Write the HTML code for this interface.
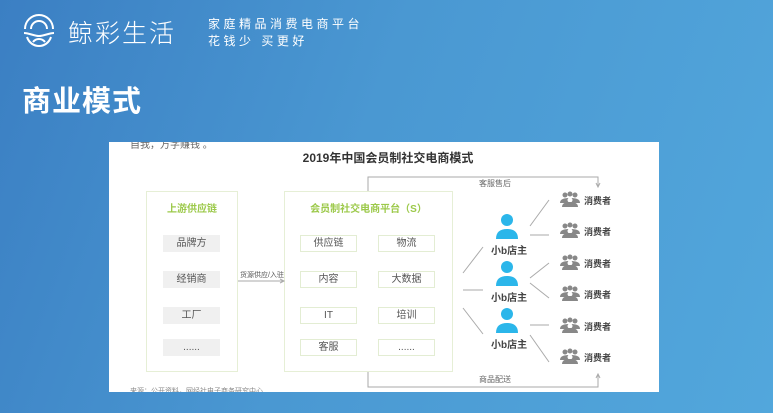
<!DOCTYPE html><html><head><meta charset="utf-8"><style>
*{margin:0;padding:0;box-sizing:border-box}
body{width:773px;height:413px;overflow:hidden;position:relative;font-family:"Liberation Sans","Noto Sans CJK SC",sans-serif;background:linear-gradient(110deg,#3b7fc3 0%,#4a98d2 45%,#52a7dc 100%)}
.a{position:absolute}
.t{color:#fff}
.card{left:109px;top:142px;width:550px;height:250px;background:#fff;overflow:hidden}
.box{position:absolute;border:1px solid #e6efd6}
.it{position:absolute;width:57px;height:17px;font-size:10px;color:#555;text-align:center;line-height:17px}
.g{background:#f0f0f0}
.w{border:1px solid #e3edd3;background:#fff;line-height:15px}
.gt{position:absolute;font-size:10px;font-weight:bold;color:#9cc94a;text-align:center}
.s{font-size:9px;color:#555;font-weight:bold}
</style></head><body>
<svg class="a" style="left:20px;top:12px" width="38" height="38" viewBox="0 0 38 38" fill="none" stroke="#fff" stroke-width="2"><path d="M5 17a14 14 0 0 1 28 0"/><path d="M11 17a8 8 0 0 1 16 0"/><path d="M4 21c5 0 10 3 15 3s10-3 15-3"/><path d="M7 25c2 6 7 9 12 9s10-3 12-9"/><path d="M13 30c3-4 9-4 12 0"/></svg>
<div class="a t" style="left:68px;top:14px;font-size:25px;letter-spacing:2px;font-weight:300">鲸彩生活</div>
<div class="a t" style="left:208px;top:15px;font-size:12px;letter-spacing:3.5px">家庭精品消费电商平台</div>
<div class="a t" style="left:208px;top:32px;font-size:12px;letter-spacing:3.5px">花钱少 买更好</div>
<div class="a t" style="left:22px;top:78px;font-size:29px;font-weight:bold;letter-spacing:1px">商业模式</div>
<div class="a card">
<div class="a" style="left:21px;top:-6px;font-size:10px;color:#666">自我，万字赚钱 。</div>
<div class="a" style="left:0;width:550px;top:7px;text-align:center;font-size:12px;font-weight:bold;color:#333;padding-left:8px">2019年中国会员制社交电商模式</div>
<div class="box" style="left:37px;top:49px;width:92px;height:181px"></div>
<div class="gt" style="left:37px;top:58px;width:92px">上游供应链</div>
<div class="it g" style="left:54px;top:93px">品牌方</div>
<div class="it g" style="left:54px;top:129px">经销商</div>
<div class="it g" style="left:54px;top:165px">工厂</div>
<div class="it g" style="left:54px;top:197px">......</div>
<div class="box" style="left:175px;top:49px;width:169px;height:181px"></div>
<div class="gt" style="left:175px;top:58px;width:169px">会员制社交电商平台（S）</div>
<div class="it w" style="left:191px;top:93px">供应链</div><div class="it w" style="left:269px;top:93px">物流</div>
<div class="it w" style="left:191px;top:129px">内容</div><div class="it w" style="left:269px;top:129px">大数据</div>
<div class="it w" style="left:191px;top:165px">IT</div><div class="it w" style="left:269px;top:165px">培训</div>
<div class="it w" style="left:191px;top:197px">客服</div><div class="it w" style="left:269px;top:197px">......</div>
<div class="a" style="left:131px;top:128px;font-size:7px;color:#555">货源供应/入驻</div>
<svg class="a" style="left:0;top:0" width="550" height="250" fill="none" stroke="#aaa" stroke-width="1">
<path d="M129 139H175M171 137l4 2-4 2"/>
<path d="M259 49V35H489V45M487 41l2 4 2-4"/>
<path d="M259 230V245H489V232M487 236l2-4 2 4"/>
<path d="M354 131l20-26M354 148h20M354 166l20 26"/>
<path d="M421 84l19-26M421 93h19M421 136l19-15M421 141l19 15M421 183h19M421 193l19 27"/>
</svg>
<div class="a" style="left:370px;top:36px;font-size:8px;color:#666">客服售后</div>
<div class="a" style="left:370px;top:232px;font-size:8px;color:#666">商品配送</div>
<svg class="a" style="left:385px;top:70px" width="24" height="130" fill="#2bb6ea">
<g id="p"><circle cx="13" cy="8" r="6"/><path d="M2 27c0-7 4-10 11-10s11 3 11 10z"/></g>
<use href="#p" y="47"/><use href="#p" y="94"/></svg>
<div class="a s" style="left:382px;top:100px;font-size:10px;color:#444">小b店主</div>
<div class="a s" style="left:382px;top:147px;font-size:10px;color:#444">小b店主</div>
<div class="a s" style="left:382px;top:194px;font-size:10px;color:#444">小b店主</div>
<svg class="a" style="left:449px;top:49px" width="24" height="180" fill="#888">
<g id="c"><circle cx="7" cy="4" r="2.5"/><circle cx="12" cy="3" r="2.5"/><circle cx="17" cy="4" r="2.5"/><path d="M2 12c0-4 4-5 10-5s10 1 10 5z"/><circle cx="12" cy="9" r="2.5" fill="#fff"/><path d="M4 16c0-4 4-5 8-5s8 1 8 5z"/></g>
<use href="#c" y="31"/><use href="#c" y="63"/><use href="#c" y="94"/><use href="#c" y="126"/><use href="#c" y="157"/></svg>
<div class="a s" style="left:475px;top:52px;font-size:9px;color:#444">消费者</div>
<div class="a s" style="left:475px;top:83px;font-size:9px;color:#444">消费者</div>
<div class="a s" style="left:475px;top:115px;font-size:9px;color:#444">消费者</div>
<div class="a s" style="left:475px;top:146px;font-size:9px;color:#444">消费者</div>
<div class="a s" style="left:475px;top:178px;font-size:9px;color:#444">消费者</div>
<div class="a s" style="left:475px;top:209px;font-size:9px;color:#444">消费者</div>
<div class="a" style="left:21px;top:244px;font-size:7px;color:#888">来源：公开资料，网经社电子商务研究中心</div>
</div>
</body></html>
